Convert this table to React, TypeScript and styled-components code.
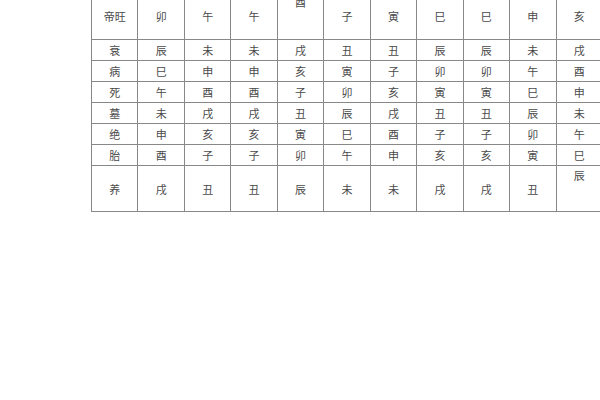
import React from 'react';
import styled, { createGlobalStyle } from 'styled-components';

const GlobalStyle = createGlobalStyle`
  html, body {
    margin: 0;
    padding: 0;
    background: #fff;
    overflow: hidden;
  }
  body {
    width: 600px;
    height: 400px;
  }
`;

const Page = styled.div`
  width: 600px;
  height: 400px;
  overflow: hidden;
  padding-left: 91px;
  box-sizing: border-box;
`;

const Table = styled.table`
  margin-top: -8px;
  width: 512px;
  table-layout: fixed;
  border-collapse: collapse;
  font-family: 'Noto Sans CJK SC', 'Noto Sans', sans-serif;
  font-size: 11px;
  color: #4a4a4a;
`;

const Row = styled.tr<{ $h: number }>`
  height: ${(p) => p.$h}px;
`;

const Cell = styled.td<{ $top?: boolean }>`
  border: 1px solid #888;
  padding: 0;
  text-align: center;
  vertical-align: ${(p) => (p.$top ? 'top' : 'middle')};
  padding-top: ${(p) => (p.$top ? '2px' : '0')};
  line-height: 14px;
`;

type Line = { name: string; h: number; cells: string[]; topAt?: number };

const rows: Line[] = [
  { name: '帝旺', h: 47, cells: ['卯', '午', '午', '酉', '子', '寅', '巳', '巳', '申', '亥'], topAt: 3 },
  { name: '衰', h: 21, cells: ['辰', '未', '未', '戌', '丑', '丑', '辰', '辰', '未', '戌'] },
  { name: '病', h: 21, cells: ['巳', '申', '申', '亥', '寅', '子', '卯', '卯', '午', '酉'] },
  { name: '死', h: 21, cells: ['午', '酉', '酉', '子', '卯', '亥', '寅', '寅', '巳', '申'] },
  { name: '墓', h: 21, cells: ['未', '戌', '戌', '丑', '辰', '戌', '丑', '丑', '辰', '未'] },
  { name: '绝', h: 21, cells: ['申', '亥', '亥', '寅', '巳', '酉', '子', '子', '卯', '午'] },
  { name: '胎', h: 21, cells: ['酉', '子', '子', '卯', '午', '申', '亥', '亥', '寅', '巳'] },
  { name: '养', h: 46, cells: ['戌', '丑', '丑', '辰', '未', '未', '戌', '戌', '丑', '辰'], topAt: 9 },
];

export default function App() {
  return (
    <Page>
      <GlobalStyle />
      <Table>
        <tbody>
          {rows.map((r) => (
            <Row key={r.name} $h={r.h}>
              <Cell>{r.name}</Cell>
              {r.cells.map((c, i) => (
                <Cell key={i} $top={r.topAt === i}>
                  {c}
                </Cell>
              ))}
            </Row>
          ))}
        </tbody>
      </Table>
    </Page>
  );
}
